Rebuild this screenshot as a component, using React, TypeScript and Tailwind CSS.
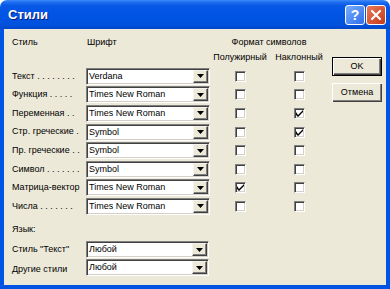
import React from "react";

const FONT = { fontFamily: "'Liberation Sans', Arial, sans-serif" };

function Combo({ value, w = "w-[124px]" }: { value: string; w?: string }) {
  return (
    <div
      className={`${w} h-[17px] flex items-center bg-white border border-t-[#808080] border-l-[#808080] border-r-white border-b-white shadow-[inset_1px_1px_0_#404040,inset_-1px_-1px_0_#d4d0c8]`}
    >
      <span className="flex-1 pl-[2px] text-[9px] leading-none text-black truncate">{value}</span>
      <div className="w-[15px] h-[13px] mr-[1px] flex items-center justify-center bg-[#ece9d8] border border-t-[#f4f3ee] border-l-[#f4f3ee] border-r-[#404040] border-b-[#404040] shadow-[inset_-1px_-1px_0_#808080]">
        <svg width="7" height="4" viewBox="0 0 7 4">
          <path d="M0 0h7L3.5 4z" fill="#000" />
        </svg>
      </div>
    </div>
  );
}

function Check({ checked }: { checked?: boolean }) {
  return (
    <div className="w-[11px] h-[11px] bg-white border border-t-[#808080] border-l-[#808080] border-r-white border-b-white shadow-[inset_1px_1px_0_#404040,inset_-1px_-1px_0_#d4d0c8] flex items-center justify-center">
      {checked && (
        <svg width="7" height="7" viewBox="0 0 7 7">
          <path d="M0 2v3l2 2 5-5V0L2 5z" fill="#000" />
        </svg>
      )}
    </div>
  );
}

const rows: [string, string, boolean, boolean][] = [
  ["Текст . . . . . . . .", "Verdana", false, false],
  ["Функция . . . . .", "Times New Roman", false, false],
  ["Переменная . .", "Times New Roman", false, true],
  ["Стр. греческие .", "Symbol", false, true],
  ["Пр. греческие . .", "Symbol", false, false],
  ["Символ . . . . . . .", "Symbol", false, false],
  ["Матрица-вектор", "Times New Roman", true, false],
  ["Числа . . . . . . .", "Times New Roman", false, false],
];

export default function App() {
  return (
    <div className="w-[390px] h-[289px] flex flex-col text-[9px] text-black" style={FONT}>
      {/* Title bar */}
      <div className="h-[29px] shrink-0 rounded-t-[7px] flex items-center pl-[8px] pr-[4px] bg-[linear-gradient(to_bottom,#3d8bf7_0%,#1e6ef0_8%,#0758e6_20%,#0054e3_55%,#0052dd_85%,#0046c8_100%)]">
        <span className="flex-1 text-white font-bold text-[13px] [text-shadow:1px_1px_0_#0a1e80]">
          Стили
        </span>
        <div className="w-[20px] h-[20px] rounded-[3px] border border-white bg-[linear-gradient(135deg,#7aaefc,#2f6cec)] flex items-center justify-center text-white font-bold text-[14px] leading-none mr-[1px]">
          ?
        </div>
        <div className="w-[20px] h-[20px] rounded-[3px] border border-white bg-[linear-gradient(135deg,#e97a5a,#c6391a)] flex items-center justify-center">
          <svg width="10" height="10" viewBox="0 0 10 10">
            <path d="M1 1L9 9M9 1L1 9" stroke="#fff" strokeWidth="2" strokeLinecap="square" />
          </svg>
        </div>
      </div>
      {/* Body */}
      <div className="flex-1 flex bg-[#ece9d8] border-x-[4px] border-b-[4px] border-[#0054e3]">
        <div className="flex flex-col pl-[8px] pt-[7px]">
          <div className="flex h-[14px] items-center">
            <div className="w-[74px]">Стиль</div>
            <div className="w-[124px] pl-[1px]">Шрифт</div>
            <div className="w-[118px] text-center">Формат символов</div>
          </div>
          <div className="flex h-[15px] items-center">
            <div className="w-[198px]" />
            <div className="w-[60px] text-center">Полужирный</div>
            <div className="w-[58px] text-center">Наклонный</div>
          </div>
          <div className="h-[2px]" />
          {rows.map(([label, font, b, i]) => (
            <div key={label} className="flex h-[18.6px] items-center">
              <div className="w-[74px] whitespace-nowrap">{label}</div>
              <Combo value={font} />
              <div className="w-[60px] flex justify-center">
                <Check checked={b} />
              </div>
              <div className="w-[58px] flex justify-center">
                <Check checked={i} />
              </div>
            </div>
          ))}
          <div className="h-[7px]" />
          <div className="h-[14px] flex items-center">Язык:</div>
          <div className="h-[4px]" />
          <div className="flex h-[18px] items-center">
            <div className="w-[74px] whitespace-nowrap">Стиль "Текст"</div>
            <Combo value="Любой" w="w-[123px]" />
          </div>
          <div className="flex h-[18px] items-center">
            <div className="w-[74px] whitespace-nowrap pt-[4px]">Другие стили</div>
            <Combo value="Любой" w="w-[123px]" />
          </div>
        </div>
        <div className="flex flex-col gap-[7px] pt-[28px] pl-[4px]">
          <div className="w-[50px] h-[19px] border border-[#000] flex items-center justify-center bg-[#ece9d8] shadow-[inset_1px_1px_0_#fff,inset_-1px_-1px_0_#404040,inset_-2px_-2px_0_#808080]">
            OK
          </div>
          <div className="w-[50px] h-[19px] flex items-center justify-center bg-[#ece9d8] shadow-[inset_1px_1px_0_#fff,inset_-1px_-1px_0_#404040,inset_-2px_-2px_0_#808080]">
            Отмена
          </div>
        </div>
      </div>
    </div>
  );
}
